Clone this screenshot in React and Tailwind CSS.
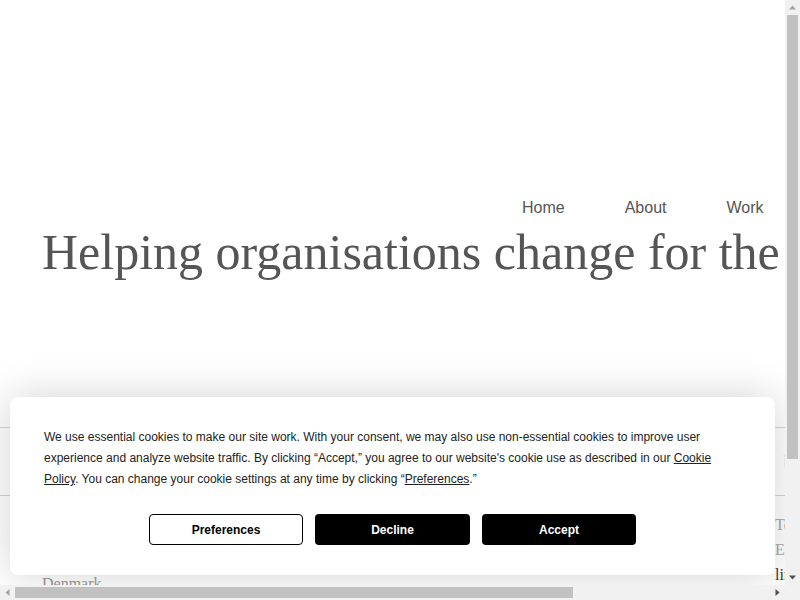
import React from "react";

function Arrow({ dir, color }) {
  const pts = {
    up: "4,9.5 7.5,5.5 11,9.5",
    down: "4,5.5 7.5,9.5 11,5.5",
    left: "9.5,4 5.5,7.5 9.5,11",
    right: "5.5,4 9.5,7.5 5.5,11",
  }[dir];
  return (
    <svg width="15" height="15" viewBox="0 0 15 15" className="block shrink-0">
      <polygon points={pts} fill={color} />
    </svg>
  );
}

export default function App() {
  return (
    <div className="w-[800px] h-[600px] overflow-hidden flex flex-col bg-white font-['Liberation_Sans',Arial,sans-serif]">
      <div className="flex h-[585px]">
        <div className="relative w-[785px] h-[585px] overflow-hidden">
          <div className="w-[1062px] min-h-[731px] bg-white">
            <nav className="flex pt-[196px] pl-[492px] text-[16px] leading-[24px] text-[#555]">
              <a className="px-[30px]">Home</a>
              <a className="px-[30px]">About</a>
              <a className="px-[30px]">Work</a>
              <a className="px-[30px]">Contact</a>
            </nav>
            <h1 className="mt-[7px] pl-[42px] font-['Liberation_Serif','Times_New_Roman',serif] text-[50px] leading-[50px] font-normal text-[#555] whitespace-nowrap">
              Helping organisations change for the better
            </h1>
            <div className="mt-[150px] h-[69px] border-t border-b border-[#d4d4d4] flex items-center pl-[42px]">
              <div className="w-[741px]" />
              <span className="font-['Liberation_Serif',serif] text-[16px] text-[#e6e6e6]">l</span>
            </div>
            <div className="flex pl-[42px] font-['Liberation_Serif','Times_New_Roman',serif] text-[16px] leading-[25px]">
              <div className="w-[733px] text-[#999]">
                <p>Change Agency ApS</p>
                <p>Nørregade 12</p>
                <p>1165 København K</p>
                <p>Denmark</p>
              </div>
              <div className="mt-[16px] text-[#aaa]">
                <p>Tel: +45 12 34 56 78</p>
                <p>Email: hello@example.dk</p>
                <p className="text-[#333]">linkedin</p>
              </div>
            </div>
          </div>

          <div className="absolute left-[10px] right-[10px] bottom-[10px] bg-white rounded-[8px] shadow-[0_0_40px_rgba(0,0,0,0.18)] pt-[30px] pb-[30px] px-[34px] text-[#222]">
            <p className="text-[12px] leading-[21px]">
              We use essential cookies to make our site work. With your consent, we may also use non-essential cookies to improve user experience and analyze website traffic. By clicking “Accept,” you agree to our website's cookie use as described in our{" "}
              <a className="underline">Cookie Policy</a>. You can change your cookie settings at any time by clicking “<a className="underline">Preferences</a>.”
            </p>
            <div className="mt-[24px] flex justify-center gap-[12px]">
              <button className="w-[154px] h-[31px] rounded-[4px] border border-black bg-white text-black text-[12px] font-bold">
                Preferences
              </button>
              <button className="w-[155px] h-[31px] rounded-[4px] bg-black text-white text-[12px] font-bold">
                Decline
              </button>
              <button className="w-[154px] h-[31px] rounded-[4px] bg-black text-white text-[12px] font-bold">
                Accept
              </button>
            </div>
          </div>
        </div>

        <div className="w-[15px] h-[585px] bg-[#f1f1f1] flex flex-col">
          <Arrow dir="up" color="#a3a3a3" />
          <div className="flex-1 flex flex-col px-[2px]">
            <div className="h-[444px] bg-[#c1c1c1]" />
          </div>
          <Arrow dir="down" color="#505050" />
        </div>
      </div>
      <div className="flex h-[15px]">
        <div className="w-[785px] h-[15px] bg-[#f1f1f1] flex">
          <Arrow dir="left" color="#a3a3a3" />
          <div className="flex-1 flex py-[2px]">
            <div className="w-[558px] bg-[#c1c1c1]" />
          </div>
          <Arrow dir="right" color="#505050" />
        </div>
        <div className="w-[15px] h-[15px] bg-[#f1f1f1]" />
      </div>
    </div>
  );
}
